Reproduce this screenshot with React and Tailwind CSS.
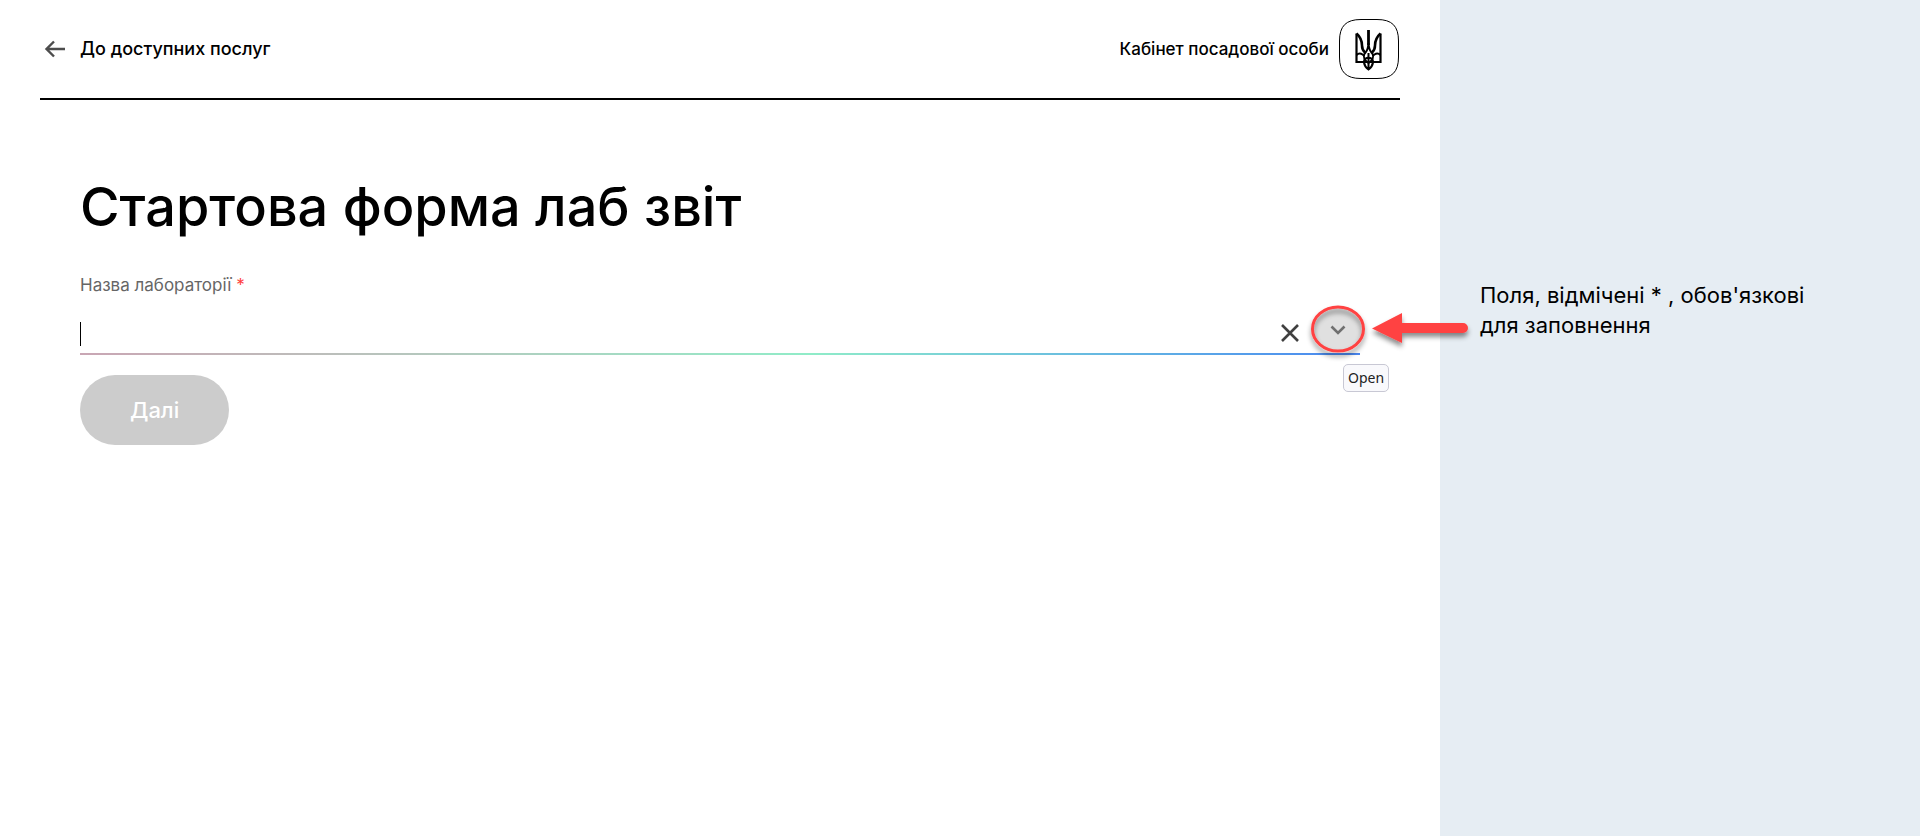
import React from "react";

function Trident() {
  return (
    <svg viewBox="0 0 60 60" className="size-[60px]" fill="none" stroke="#000" aria-label="Тризуб" role="img">
      <path d="M22 .5H38C53 .5 59.500 7 59.500 22V38C59.500 53 53 59.500 38 59.500H22C7 59.500 .5 53 .5 38V22C.5 7 7 .5 22 .5Z" />
      <g strokeWidth="2">
        <path d="M29.500 11V26" strokeWidth="2.800" />
        <path d="M29.500 24C29.200 29 28.500 31.500 26.500 33.500C24.500 35.500 24.500 39 26.500 41.500L29.500 44L32.500 41.500C34.500 39 34.500 35.500 32.500 33.500C30.500 31.500 29.800 29 29.500 24Z" />
        <path d="M17.500 14.500V43H41.500V14.500" strokeWidth="2.200" />
        <path d="M17.500 14.500C21.500 18 23 22 23 26.500C23 29.500 23.800 31.500 26 33.500M41.500 14.500C37.500 18 36 22 36 26.500C36 29.500 35.200 31.500 33 33.500" strokeWidth="2.600" />
        <path d="M17.500 36C19.500 34 21.500 34 23.500 35.500L25.500 37M41.500 36C39.500 34 37.500 34 35.500 35.500L33.500 37" />
        <path d="M29.500 38.500C26.500 39 24.800 41 25 43.500C25.500 47 27.500 49 29.500 50.500C31.500 49 33.500 47 34 43.500C34.200 41 32.500 39 29.500 38.500ZM29.500 34V50" />
      </g>
    </svg>
  );
}

function Header() {
  return (
    <header className="flex items-center justify-between border-b-2 border-black py-[19px]">
      <a href="#services" className="flex items-center gap-3 pl-1 text-lg font-medium">
        <svg viewBox="0 0 24 24" className="size-6" fill="none" stroke="#4d4d4d" strokeWidth="2.400" aria-hidden="true">
          <path d="M21 12H2.500M10 4.500L2.500 12L10 19.500" />
        </svg>
        До доступних послуг
      </a>
      <div className="flex items-center gap-[10px] pr-px text-[17px] leading-7 font-medium">
        Кабінет посадової особи
        <Trident />
      </div>
    </header>
  );
}

function LabField() {
  return (
    <div>
      <label htmlFor="lab" className="block text-[17px] leading-6 text-[#666]">
        Назва лабораторії <span className="text-[#ff4040]">*</span>
      </label>
      <div className="relative mt-[14px] h-[44px]">
        <input id="lab" type="text" required className="h-full w-full bg-transparent pr-24 text-xl caret-transparent outline-none" />
        <span className="absolute left-0 top-[11px] h-6 w-px bg-black" />
        <div className="absolute inset-x-0 bottom-0 h-[2px] bg-linear-to-r from-[#c9a6b4] via-[#90ecc8] via-57% to-[#4a86f0]" />
        <button type="button" aria-label="Clear" className="absolute right-[60px] top-[12px] size-5">
          <svg viewBox="0 0 20 20" fill="none" stroke="#404040" strokeWidth="2.600" aria-hidden="true">
            <path d="M2 2L18 18M18 2L2 18" />
          </svg>
        </button>
        <button type="button" aria-label="Open" className="absolute -right-[9px] -top-[9px] h-[56px] w-[60px]">
          <svg viewBox="0 0 60 56" fill="none" className="overflow-visible" aria-hidden="true">
            <defs>
              <filter id="shadow" x="-30%" y="-30%" width="160%" height="180%">
                <feDropShadow dx="0" dy="4" stdDeviation="2.5" floodColor="#000" floodOpacity="0.45" />
              </filter>
            </defs>
            <ellipse cx="29" cy="27" rx="25" ry="22" fill="#e0e0e0" />
            <ellipse cx="29" cy="27" rx="25.500" ry="22" stroke="#ff4343" strokeWidth="3" filter="url(#shadow)" />
            <path d="M22.500 24.500L29 31L35.500 24.500" stroke="#707070" strokeWidth="2.600" />
          </svg>
        </button>
        <span role="tooltip" className="absolute -right-[29px] top-[53px] flex h-[28px] w-[46px] items-center justify-center rounded-[5px] border border-[#c8c8d4] bg-[#f9f9fc] font-['Noto_Sans',sans-serif] text-sm text-[#222]">
          Open
        </span>
        <svg viewBox="0 0 96 32" className="absolute -right-[108px] top-[2px] h-[32px] w-[96px] overflow-visible" aria-hidden="true">
          <g fill="#ff4343" filter="url(#shadow)">
            <path d="M0 15.500L30 0V10H91A5 5 0 0 1 91 20H30V30Z" />
          </g>
        </svg>
      </div>
    </div>
  );
}

export default function App() {
  return (
    <div className="grid min-h-screen grid-cols-[3fr_1fr] bg-white font-['Inter','Liberation_Sans',sans-serif] text-black">
      <main className="relative z-10 px-10">
        <Header />
        <section className="px-10 pt-[75px]">
          <h1 className="text-[54px] leading-[64px] font-medium">Стартова форма лаб звіт</h1>
          <form className="mt-[34px]">
            <LabField />
            <button type="submit" disabled className="mt-5 h-[70px] rounded-full bg-[#ccc] px-[50px] text-[22px] font-medium text-white">
              Далі
            </button>
          </form>
        </section>
      </main>
      <aside className="bg-[#e6edf3] px-10 pt-[280px]">
        <p className="max-w-[360px] text-[22px] leading-[30px]">
          Поля, відмічені * , обов'язкові для заповнення
        </p>
      </aside>
    </div>
  );
}
